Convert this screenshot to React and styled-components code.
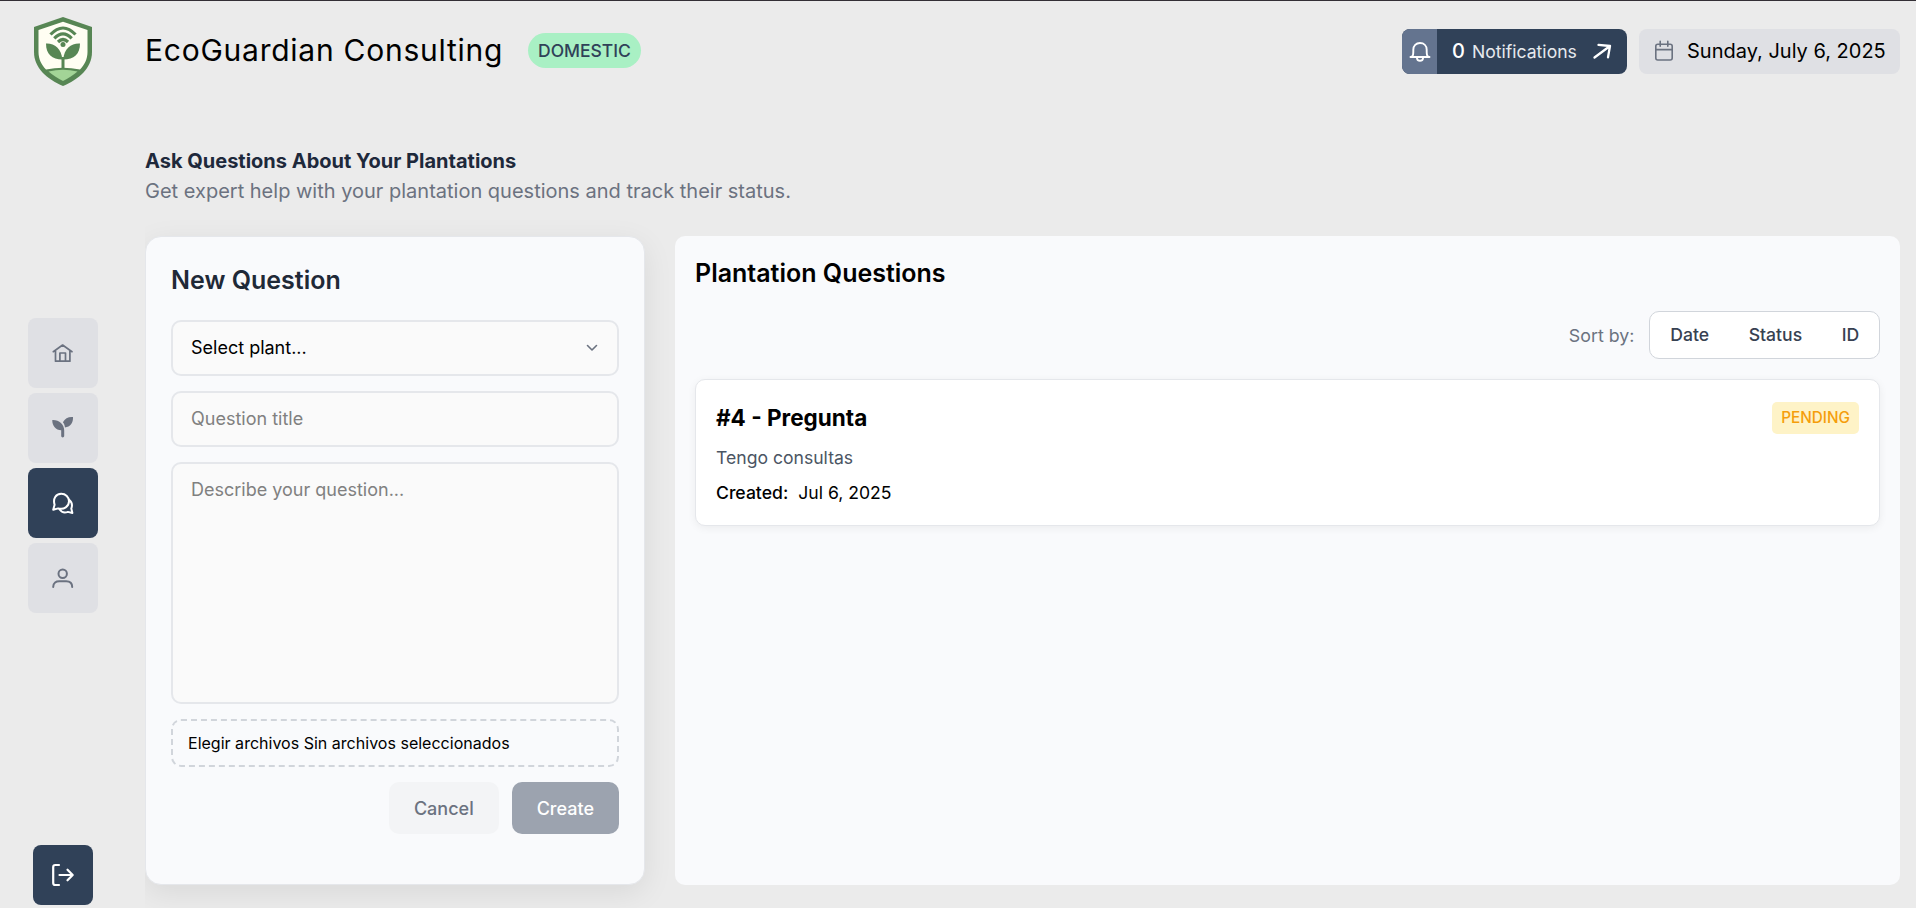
import React from "react";
import styled, { createGlobalStyle } from "styled-components";

const GlobalStyle = createGlobalStyle`
  *, *::before, *::after { box-sizing: border-box; }
  body { margin: 0; background: #ebebeb; font-family: Inter, "Liberation Sans", sans-serif; }
  h1, h2, h3, p { margin: 0; }
  button, input, textarea { font-family: inherit; }
`;

const Shell = styled.div`
  display: flex;
  flex-direction: column;
  height: 100vh;
  min-height: 908px;
  border-top: 1px solid #332f35;
  background: #ebebeb;
  overflow: hidden;
`;

const Header = styled.header`
  display: flex;
  align-items: center;
  height: 101px;
  flex: none;
  padding-right: 16px;
`;

const LogoCell = styled.div`
  display: flex;
  justify-content: center;
  width: 126px;
  margin-right: 19px;
`;

const Title = styled.h1`
  width: 362px;
  white-space: nowrap;
  font-size: 30px;
  font-weight: 400;
  letter-spacing: 0.75px;
  line-height: 36px;
  color: #000;
  padding-bottom: 3px;
`;

const PlanBadge = styled.span`
  margin: 0 auto 2px 21px;
  padding: 0 10px;
  border-radius: 18px;
  background: #a9f0c4;
  color: #304158;
  font-size: 17.5px;
  font-weight: 500;
  line-height: 35px;
`;

const NotificationButton = styled.button`
  display: flex;
  align-items: center;
  width: 225px;
  height: 45px;
  padding: 0;
  border: 0;
  border-radius: 8px;
  overflow: hidden;
  background: #304158;
  color: #fff;
`;

const BellBox = styled.span`
  display: flex;
  align-items: center;
  justify-content: center;
  width: 35px;
  height: 45px;
  margin-right: 15px;
  background: #64748f;
`;

const Count = styled.span`
  font-size: 20px;
  font-weight: 500;
  line-height: 24px;
  padding-bottom: 1px;
`;

const NotificationLabel = styled.span`
  margin: 0 15px 0 7px;
  font-size: 17.6px;
  line-height: 24px;
  color: #e6e9ee;
`;

const DateBox = styled.div`
  display: flex;
  align-items: center;
  width: 261px;
  height: 45px;
  margin-left: 12px;
  padding-left: 15px;
  border-radius: 8px;
  background: #dfe0e4;
  color: #6b7280;
  font-size: 20px;

  span { margin-left: 13px; padding-bottom: 1px; white-space: nowrap; color: #000; }
`;

const Body = styled.div`
  display: flex;
  flex: 1;
  min-height: 0;
`;

const Sidebar = styled.aside`
  display: flex;
  flex-direction: column;
  align-items: center;
  justify-content: space-between;
  width: 126px;
  margin-right: 19px;
  padding: 216px 0 3px;
  flex: none;
`;

const Nav = styled.nav`
  display: flex;
  flex-direction: column;
  gap: 5px;
`;

const NavButton = styled.button`
  display: flex;
  align-items: center;
  justify-content: center;
  width: ${(p) => p.$size || 70}px;
  height: ${(p) => p.$size || 70}px;
  padding: 0;
  border: 0;
  border-radius: 8px;
  background: ${(p) => (p.$active ? "#304158" : "#dfe0e4")};
  color: ${(p) => (p.$active ? "#fff" : "#6b7280")};
`;

const Main = styled.main`
  display: flex;
  flex-direction: column;
  flex: 1;
  min-width: 0;
  padding: 44px 16px 23px 0;
  overflow: hidden;
`;

const PageTitle = styled.h2`
  font-size: 20px;
  font-weight: 700;
  line-height: 30px;
  color: #1e293b;
`;

const PageSubtitle = styled.p`
  font-size: 20px;
  line-height: 30px;
  color: #6b7280;
`;

const Columns = styled.div`
  display: flex;
  gap: 30px;
  flex: 1;
  min-height: 0;
  margin-top: 30px;
`;

const FormCard = styled.form`
  display: flex;
  flex-direction: column;
  gap: 15px;
  width: 500px;
  flex: none;
  padding: 25px;
  border: 1px solid #e5e7eb;
  border-radius: 16px;
  background: #f9fafc;
  box-shadow: 0 8px 30px rgba(0, 0, 0, 0.08);
`;

const FormTitle = styled.h3`
  margin-bottom: 7px;
  font-size: 25px;
  font-weight: 600;
  line-height: 36px;
  color: #1f2937;
`;

const fieldStyle = `
  width: 100%;
  border: 2px solid #e5e7eb;
  border-radius: 10px;
  background: #fafafa;
  font-size: 18px;
  outline: none;
`;

const SelectField = styled.button.attrs({ type: "button" })`
  ${fieldStyle}
  display: flex;
  align-items: center;
  justify-content: space-between;
  height: 56px;
  padding: 0 19px 1px 18px;
  color: #000;
`;

const TextField = styled.input`
  ${fieldStyle}
  height: 56px;
  padding: 0 18px 2px;
  &::placeholder { color: #808080; opacity: 1; }
`;

const TextArea = styled.textarea`
  ${fieldStyle}
  display: block;
  height: 242px;
  padding: 15px 18px;
  line-height: 22px;
  resize: none;
  &::placeholder { color: #808080; opacity: 1; }
`;

const FilePicker = styled.div`
  display: flex;
  align-items: center;
  height: 48px;
  padding-left: 15px;
  border: 2px dashed #d1d5db;
  border-radius: 10px;
  font-size: 16.05px;
  color: #000;
`;

const Actions = styled.div`
  display: flex;
  justify-content: flex-end;
  gap: 13px;
`;

const ActionButton = styled.button.attrs({ type: "button" })`
  height: 52px;
  padding: 0 25px;
  border: 0;
  border-radius: 10px;
  font-size: 18px;
  font-weight: 500;
  background: ${(p) => (p.$primary ? "#9ca3af" : "#f3f4f6")};
  color: ${(p) => (p.$primary ? "#fff" : "#6b7280")};
`;

const Panel = styled.section`
  flex: 1;
  min-width: 0;
  padding: 20px;
  border-radius: 10px;
  background: #f9fafc;
`;

const PanelTitle = styled.h3`
  font-size: 25px;
  font-weight: 600;
  line-height: 34px;
  color: #000;
`;

const SortRow = styled.div`
  display: flex;
  align-items: center;
  justify-content: flex-end;
  gap: 15px;
  margin: 21px 0 20px;
  font-size: 17.8px;
  color: #6b7280;
`;

const SortGroup = styled.div`
  display: flex;
  height: 48px;
  border: 1px solid #d1d5db;
  border-radius: 10px;
  background: #fff;
`;

const SortOption = styled.button`
  padding: 0 19.8px 1px;
  border: 0;
  background: none;
  font-size: 17.6px;
  font-weight: 500;
  color: #374151;
`;

const QuestionCard = styled.article`
  height: 147px;
  padding: 20px;
  border: 1px solid #e5e7eb;
  border-radius: 10px;
  background: #fff;
  box-shadow: 0 2px 8px rgba(0, 0, 0, 0.06);
`;

const QuestionHead = styled.div`
  display: flex;
  align-items: center;
  justify-content: space-between;
  height: 36px;
`;

const QuestionTitle = styled.h3`
  padding-bottom: 2px;
  font-size: 22.5px;
  font-weight: 700;
  color: #000;
`;

const StatusTag = styled.span`
  padding: 0 9px;
  border-radius: 5px;
  background: #fef3c7;
  color: #f59e0b;
  font-size: 15.3px;
  font-weight: 500;
  line-height: 32px;
`;

const QuestionText = styled.p`
  margin-top: 9px;
  font-size: 17.6px;
  line-height: 26px;
  color: #4b5563;
`;

const QuestionMeta = styled.p`
  display: flex;
  gap: 10px;
  margin-top: 8px;
  font-size: 17.6px;
  line-height: 27px;
  color: #000;

  b { font-weight: 500; }
`;

const Icon = ({ size = 22, w = size, h = size, stroke = 1.7, children }) => (
  <svg width={w} height={h} viewBox={`0 0 ${w} ${h}`} fill="none" stroke="currentColor"
    strokeWidth={stroke} strokeLinecap="round" strokeLinejoin="round">
    {children}
  </svg>
);

const Logo = () => (
  <svg width="58" height="69" viewBox="0 0 58 69" fill="none">
    <path d="M29 0 58 10V35C58 51 45 62 29 69C13 62 0 51 0 35V10Z" fill="#578654" />
    <path d="M29 4.8 53.5 13V35C53.5 42 50.5 48 46 52.5Q29 49 12 52.5C7.500 48 4.500 42 4.500 35V13Z" fill="#fffef3" />
    <path d="M14.500 54.5Q29 51 43.500 54.5C39 58.500 34 61.500 29 64C24 61.500 19 58.500 14.500 54.5Z" fill="#a3d497" />
    <g stroke="#578654" strokeWidth="3.200">
      <path d="M16.500 17.500Q29 4.500 41.500 17.500" />
      <path d="M20.300 21.300Q29 12.500 37.700 21.300" />
      <path d="M24 25Q29 20 34 25" />
    </g>
    <circle cx="29" cy="27.500" r="2.500" fill="#578654" />
    <path d="M12 26.500C20 26 27.500 31 28.300 42.500C18 42.500 12 37 12 26.500Z" fill="#578654" />
    <path d="M46 26.500C37.500 26 30 31 29.300 42.500C40 42.500 46 37 46 26.500Z" fill="#578654" />
    <path d="M29 52V40" stroke="#578654" strokeWidth="3" />
  </svg>
);

const BellIcon = () => (
  <Icon stroke={1.900}>
    <path d="M1.500 16C4.700 16 4.300 12 4.300 8.800C4.300 4.700 7.100 2 11 2S17.700 4.700 17.700 8.800C17.700 12 17.300 16 20.500 16Z" />
    <path d="M8 17.300C8.500 20.500 13.500 20.500 14 17.300" />
  </Icon>
);

const ArrowIcon = () => (
  <Icon w={20} h={20} stroke={2.300}>
    <path d="M2.500 15.500 18 4M6.500 2.800 18 4 16 15.300" />
  </Icon>
);

const CalendarIcon = () => (
  <Icon w={20} h={24} stroke={1.600}>
    <rect x="1.800" y="4.200" width="16.400" height="15.800" rx="2" />
    <path d="M1.800 9.600H18.200M6.200 1.300V6.300M13.800 1.300V6.300" />
  </Icon>
);

const HomeIcon = () => (
  <Icon stroke={1.700}>
    <path d="M1.300 9.700 10.600 3 20 9.700M3.500 8.300V19.200H17.900V8.300M7.900 19V11H13.500V19" />
  </Icon>
);

const PlantIcon = () => (
  <Icon h={24}>
    <path stroke="none" fill="currentColor" d="M.3 3.900C6.900 3.500 12.200 8 12.200 14.200V20C12.200 21.900 9.200 21.900 9.200 20V14.200C3.900 14.200.1 9.800.3 3.900Z" />
    <path stroke="none" fill="currentColor" d="M21 1.100C21.400 6.700 18.200 11.200 13 11.500C12.800 9.300 12 7.700 10.900 6.300C13 2.500 16.400.7 21 1.100Z" />
  </Icon>
);

const ChatIcon = () => (
  <Icon stroke={2}>
    <path d="M1.200 17.700 2.600 12.800C.7 6.500 3.900 1.800 9.200 1.800C13.700 1.800 17 5 17 9.300C17 14.500 12 18 6.200 16.400Z" />
    <path d="M16.900 7.600C20 10 20.700 13 19.300 16.600L20.400 21 15.900 19.900C12.500 21.200 9.500 20.300 7.500 17.300" />
  </Icon>
);

const UserIcon = () => (
  <Icon stroke={2}>
    <circle cx="10.700" cy="6.800" r="4.200" />
    <path d="M1.200 20C1.200 15.500 4.200 14.200 7.200 14.200H14.200C17.200 14.200 20.200 15.500 20.200 20" />
  </Icon>
);

const LogoutIcon = () => (
  <Icon w={24} h={24} stroke={2.200}>
    <path d="M8 2H4.200Q2.200 2 2.200 4V20Q2.200 22 4.200 22H8M8.500 12H21.500M16.500 6.700 21.700 12 16.500 17.300" />
  </Icon>
);

const ChevronIcon = () => (
  <Icon w={12} h={8} stroke={1.600}>
    <path d="M1.500 1.500 6 6 10.500 1.500" stroke="#6b7280" />
  </Icon>
);

const navItems = [
  { id: "home", label: "Home", Glyph: HomeIcon },
  { id: "plants", label: "Plantations", Glyph: PlantIcon },
  { id: "questions", label: "Questions", Glyph: ChatIcon, active: true },
  { id: "profile", label: "Profile", Glyph: UserIcon },
];

export default function App() {
  return (
    <>
      <GlobalStyle />
      <Shell>
        <Header>
          <LogoCell><Logo /></LogoCell>
          <Title>EcoGuardian Consulting</Title>
          <PlanBadge>DOMESTIC</PlanBadge>
          <NotificationButton>
            <BellBox><BellIcon /></BellBox>
            <Count>0</Count>
            <NotificationLabel>Notifications</NotificationLabel>
            <ArrowIcon />
          </NotificationButton>
          <DateBox><CalendarIcon /><span>Sunday, July 6, 2025</span></DateBox>
        </Header>
        <Body>
          <Sidebar>
            <Nav>
              {navItems.map(({ id, label, Glyph, active }) => (
                <NavButton key={id} $active={active} aria-label={label}><Glyph /></NavButton>
              ))}
            </Nav>
            <NavButton $active $size={60} aria-label="Log out"><LogoutIcon /></NavButton>
          </Sidebar>
          <Main>
            <PageTitle>Ask Questions About Your Plantations</PageTitle>
            <PageSubtitle>Get expert help with your plantation questions and track their status.</PageSubtitle>
            <Columns>
              <FormCard>
                <FormTitle>New Question</FormTitle>
                <SelectField>Select plant...<ChevronIcon /></SelectField>
                <TextField placeholder="Question title" />
                <TextArea placeholder="Describe your question..." />
                <FilePicker>Elegir archivos Sin archivos seleccionados</FilePicker>
                <Actions>
                  <ActionButton>Cancel</ActionButton>
                  <ActionButton $primary>Create</ActionButton>
                </Actions>
              </FormCard>
              <Panel>
                <PanelTitle>Plantation Questions</PanelTitle>
                <SortRow>
                  Sort by:
                  <SortGroup>
                    <SortOption>Date</SortOption>
                    <SortOption>Status</SortOption>
                    <SortOption>ID</SortOption>
                  </SortGroup>
                </SortRow>
                <QuestionCard>
                  <QuestionHead>
                    <QuestionTitle>#4 - Pregunta</QuestionTitle>
                    <StatusTag>PENDING</StatusTag>
                  </QuestionHead>
                  <QuestionText>Tengo consultas</QuestionText>
                  <QuestionMeta><b>Created:</b><span>Jul 6, 2025</span></QuestionMeta>
                </QuestionCard>
              </Panel>
            </Columns>
          </Main>
        </Body>
      </Shell>
    </>
  );
}
